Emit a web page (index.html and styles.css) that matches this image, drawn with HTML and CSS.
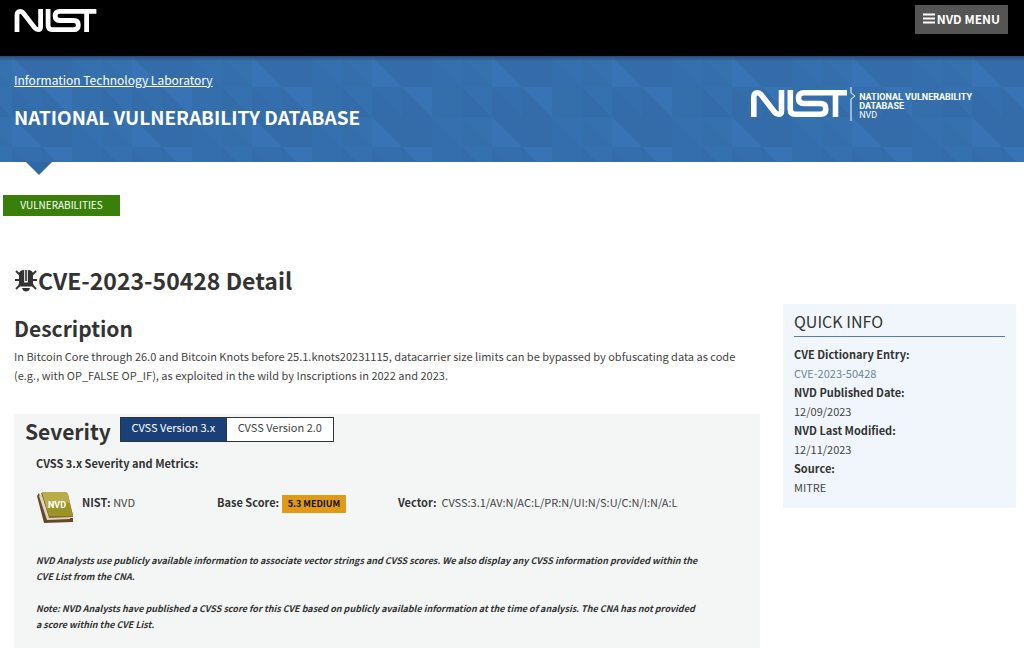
FILE: index.html
```html
<!DOCTYPE html>
<html lang="en">
<head>
<meta charset="utf-8">
<title>NVD - CVE-2023-50428</title>
<link rel="stylesheet" href="styles.css">
</head>
<body>
<svg class="defs" aria-hidden="true">
  <symbol id="nist" viewBox="0 0 96 27">
    <g fill="none" stroke="currentColor" stroke-width="5.600">
      <path d="M2.800 27V7Q2.800 2.800 6.500 2.800Q8.500 2.800 10 4.500L23.500 22Q25.500 24.200 27.500 24.200Q30.500 24.200 30.500 21V0"/>
      <path d="M39.300 0V19.500Q39.300 24.200 44 24.200H69.500Q74.800 24.200 74.800 19Q74.800 13.500 69.500 13.500H53Q47.500 13.500 47.500 8Q47.500 2.800 53 2.800H96"/>
      <path d="M84.500 2.800V27"/>
    </g>
  </symbol>
</svg>
<header class="topbar">
  <a class="logo" href="#" aria-label="NIST"><svg><use href="#nist"/></svg></a>
  <button class="menu" type="button">
    <svg class="bars" viewBox="0 0 12 11" aria-hidden="true"><path d="M0 1.500H12M0 5.500H12M0 9.500H12" stroke="currentColor" stroke-width="2"/></svg>NVD MENU
  </button>
</header>
<div class="banner">
  <svg class="pattern" aria-hidden="true">
    <defs>
      <pattern id="facets" x="12" y="1" width="120" height="60" patternUnits="userSpaceOnUse">
        <path fill="#336ca8" d="M0 30H30L60 60H0ZM0 0L30 30H60V0Z"/>
        <path fill="#346eac" d="M60 0L90 30H60ZM0 30H30V60Z"/>
        <path fill="#336ca8" d="M90 30L120 60H90ZM30 30L60 60H30Z"/>
        <path fill="#3773b5" d="M0 0V30H30ZM30 30H60V60Z"/>
        <path fill="#3570af" d="M60 0H90V30ZM90 30H120V60ZM90 0H120V30Z"/>
      </pattern>
    </defs>
    <rect width="100%" height="100%" fill="url(#facets)"/>
  </svg>
  <div class="banner-titles">
    <a class="lab" href="#">Information Technology Laboratory</a>
    <p class="site-title">NATIONAL VULNERABILITY DATABASE</p>
  </div>
  <a class="brand" href="#">
    <svg class="brand-nist" aria-label="NIST"><use href="#nist"/></svg>
    <svg class="brand-rule" viewBox="0 0 6 34" aria-hidden="true"><path d="M1 0V6L5 9L1 12V34" fill="none" stroke="currentColor"/></svg>
    <span class="brand-text"><b>NATIONAL VULNERABILITY<br>DATABASE</b><br>NVD</span>
  </a>
</div>
<main class="page">
  <a class="tag" href="#">VULNERABILITIES</a>
  <div class="columns">
    <div class="detail">
      <h1 class="title"><svg class="bug" viewBox="0 0 24 24" aria-hidden="true"><g fill="none" stroke="currentColor" stroke-width="1.800"><path d="M2 3L6 7M22 3L18 7M1 12H6M23 12H18M2 21L6 17M22 21L18 17"/></g><path fill="currentColor" d="M5 5Q6 2 10.200 2V14.500H13.800V2Q18 2 19 5V15L20 18.500H4L5 15ZM11.200 2H12.800V13H11.200ZM8 20H16Q15 23.500 12 23.500Q9 23.500 8 20Z"/></svg>CVE-2023-50428 Detail</h1>
      <h2 class="heading">Description</h2>
      <p class="text">In Bitcoin Core through 26.0 and Bitcoin Knots before 25.1.knots20231115, datacarrier size limits can be bypassed by obfuscating data as code (e.g., with OP_FALSE OP_IF), as exploited in the wild by Inscriptions in 2022 and 2023.</p>
      <section class="severity">
        <div class="severity-head">
          <h2 class="heading">Severity</h2>
          <div class="tabs"><button class="tab active" type="button">CVSS Version 3.x</button><button class="tab" type="button">CVSS Version 2.0</button></div>
        </div>
        <div class="metrics">
          <h3 class="subhead">CVSS 3.x Severity and Metrics:</h3>
          <div class="scores">
            <div class="source">
              <svg class="book" viewBox="0 0 38 33" aria-hidden="true"><path fill="#65482c" d="M1 5L3 2L11 26L37 27V31L8 32Z"/><path fill="#ddd5ba" d="M3 5L11 29L34 28L34 26L12 25L5 3Z"/><path fill="#8b6a31" d="M5 2L13 27L37 26V24L31 2Z"/><path fill="#9c9327" d="M6 1H29Q31 1 32 3L37 25H13Z"/><path fill="#b9ac4b" d="M6 1H29Q31 1 32 3L34 12Q22 10 11 18Z"/><text class="book-label" x="12" y="17">NVD</text></svg>
              <span><b>NIST:</b> NVD</span>
            </div>
            <div><b>Base Score:</b> <a class="badge" href="#">5.3 MEDIUM</a></div>
            <div class="vector"><b>Vector:</b>&nbsp; CVSS:3.1/AV:N/AC:L/PR:N/UI:N/S:U/C:N/I:N/A:L</div>
          </div>
          <p class="note">NVD Analysts use publicly available information to associate vector strings and CVSS scores. We also display any CVSS information provided within the<br>CVE List from the CNA.</p>
          <p class="note">Note: NVD Analysts have published a CVSS score for this CVE based on publicly available information at the time of analysis. The CNA has not provided<br>a score within the CVE List.</p>
        </div>
      </section>
    </div>
    <aside class="quick">
      <h2 class="quick-title">QUICK INFO</h2>
      <dl class="facts">
        <dt>CVE Dictionary Entry:</dt><dd><a href="#">CVE-2023-50428</a></dd>
        <dt>NVD Published Date:</dt><dd>12/09/2023</dd>
        <dt>NVD Last Modified:</dt><dd>12/11/2023</dd>
        <dt>Source:</dt><dd>MITRE</dd>
      </dl>
    </aside>
  </div>
</main>
</body>
</html>
```
FILE: styles.css
```css
* { box-sizing: border-box; }
body { margin: 0; background: #fff; color: #444; font: 11px/19px "Noto Sans CJK SC", "Open Sans", sans-serif; }
h1, h2, h3, p, dl, dd { margin: 0; }
b, dt, h1, h2, h3 { color: #333; }
.defs { display: none; }
.topbar { display: flex; justify-content: space-between; align-items: flex-start; height: 56px; padding: 5px 16px 0 14px; background: #000; }
.logo { color: #fff; margin-top: 4px; }
.logo svg { display: block; width: 83px; height: 23px; }
.menu { display: flex; align-items: center; gap: 2px; padding: 4px 8px 6px; border: 0; background: #555; color: #fff; font: bold 12px/19px "Noto Sans CJK SC", sans-serif; }
.bars { width: 12px; height: 11px; }
.banner { position: relative; display: flex; justify-content: space-between; padding: 14px 52px 0 14px; height: 106px; color: #fff; background: #346fac; }
.banner::before { content: ""; position: absolute; left: 0; right: 0; top: 0; height: 5px; background: linear-gradient(#2a4c73, #2a4c7300); z-index: 1; }
.banner::after { content: ""; position: absolute; left: 26px; top: 100%; border: 13px solid transparent; border-top-color: #3068a4; border-bottom: 0; }
.pattern { position: absolute; left: 0; top: 0; width: 100%; height: 100%; }
.banner-titles, .brand { position: relative; }
.lab { color: #fff; font-size: 12px; }
.site-title { margin-top: 14px; font-size: 19px; line-height: 26px; font-weight: bold; }
.brand { display: flex; gap: 3px; margin-top: 17px; height: 34px; color: #fff; text-decoration: none; }
.brand-nist { width: 96px; height: 27px; margin-top: 3px; }
.brand-rule { width: 6px; height: 34px; }
.brand-text { padding-top: 6px; font: 9px/9px Roboto, Arial, sans-serif; }
.brand-text b { color: #fff; }
.page { padding: 33px 8px 0 3px; }
.tag { display: block; width: 117px; padding: 0 0 2px; background: #397f0a; color: #fff; font-size: 10px; line-height: 19px; text-align: center; text-decoration: none; }
.columns { display: flex; align-items: flex-start; gap: 23px; padding-top: 48px; }
.detail { flex: 1; padding-left: 11px; }
.title { display: flex; align-items: center; font-size: 23px; line-height: 32px; }
.bug { width: 24px; height: 24px; }
.heading { font-size: 21px; line-height: 28px; }
.title + .heading { margin-top: 18px; }
.text { margin-top: 5px; }
.severity { margin-top: 29px; padding: 3px 11px; background: #f4f6f6; }
.severity-head { display: flex; gap: 9px; }
.tabs { display: flex; height: 25px; border: 1px solid #333; }
.tab { width: 106px; padding: 0 0 4px; border: 0; background: #fff; color: #444; font: 11px/19px "Noto Sans CJK SC", sans-serif; }
.tab.active { background: #1b4078; color: #fff; border-right: 1px solid #333; }
.metrics { padding: 9px 0 20px 11px; }
.subhead { font-size: 11px; line-height: 19px; }
.scores { display: grid; grid-template-columns: 181px 181px 1fr; align-items: start; padding-top: 18px; line-height: 23px; margin-bottom: 29px; white-space: nowrap; }
.source { display: flex; align-items: flex-start; gap: 8px; }
.book { width: 38px; height: 33px; }
.book-label { fill: #fff; font: bold 9px Roboto, sans-serif; }
.badge { display: inline-block; padding: 0 6px; background: #e09b16; color: #111; font-weight: bold; font-size: 9px; line-height: 18px; text-decoration: none; }
.note { margin-bottom: 16px; color: #333; font-size: 9px; line-height: 16px; font-weight: bold; font-style: italic; }
.quick { flex: 0 0 233px; margin-top: 40px; padding: 8px 11px 11px; background: #f1f6fd; }
.quick-title { padding-bottom: 5px; border-bottom: 1px solid #5b7ea0; font-size: 16px; line-height: 19px; font-weight: normal; }
.facts { padding-top: 8px; }
.facts dt { font-weight: bold; }
.facts a { color: #6c84a3; text-decoration: none; }
```
